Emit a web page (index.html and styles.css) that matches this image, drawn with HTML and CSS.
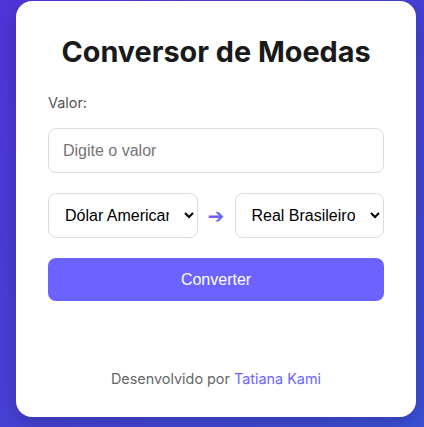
FILE: index.html
```html
<!DOCTYPE html>
<html lang="pt-BR">
<head>
<meta charset="UTF-8">
<title>Conversor de Moedas</title>
<link rel="stylesheet" href="styles.css">
</head>
<body>
<main class="card">
  <h1 class="title">Conversor de Moedas</h1>
  <label class="label" for="valor">Valor:</label>
  <input class="input" id="valor" type="text" placeholder="Digite o valor">
  <div class="row">
    <select class="select">
      <option>Dólar Americano</option>
    </select>
    <span class="arrow">➔</span>
    <select class="select">
      <option>Real Brasileiro</option>
    </select>
  </div>
  <button class="btn">Converter</button>
  <p class="footer">Desenvolvido por <a class="link" href="#">Tatiana Kami</a></p>
</main>
</body>
</html>
```

FILE: styles.css
```css
* { box-sizing: border-box; }
html, body { height: 100%; }
body {
  margin: 0;
  padding: 1px 8px 0 16px;
  background: linear-gradient(135deg, #5134d9 0%, #4741d6 50%, #3b50d5 100%);
  font-family: Inter, "Liberation Sans", sans-serif;
}
.card {
  width: 400px;
  height: 416px;
  background: #fff;
  border-radius: 16px;
  padding: 33px 32px 0;
  display: flex;
  flex-direction: column;
  box-shadow: 0 6px 20px rgba(0,0,0,0.2);
}
.title {
  margin: 0 0 25px;
  text-align: center;
  font-size: 28.8px;
  font-weight: 700;
  color: #1a1a1a;
  line-height: 35px;
}
.label {
  font-size: 14.4px;
  color: #555;
  line-height: 17px;
  margin-bottom: 17px;
}
.input {
  height: 45px;
  border: 1px solid #ddd;
  border-radius: 8px;
  padding: 0 14px;
  font-family: "Liberation Sans", Arial, sans-serif;
  font-size: 16px;
  margin: 0 0 20px;
  outline: none;
}
.input::placeholder { color: #757575; }
.row {
  display: flex;
  align-items: center;
  gap: 8px;
  margin-bottom: 20px;
}
.select {
  flex: 1;
  min-width: 0;
  height: 45px;
  border: 1px solid #ddd;
  border-radius: 8px;
  background: #fff;
  padding: 0 12px;
  font-family: "Liberation Sans", Arial, sans-serif;
  font-size: 16px;
  color: #000;
  text-align: center;
}
.arrow {
  width: 21px;
  color: #6c63ff;
  font-size: 20px;
  font-weight: bold;
  text-align: center;
  font-family: "DejaVu Sans", sans-serif;
}
.btn {
  height: 43px;
  border: none;
  border-radius: 8px;
  background: #6c63ff;
  color: #fff;
  font-family: "Liberation Sans", Arial, sans-serif;
  font-size: 16px;
}
.footer {
  margin: auto 0 30px;
  text-align: center;
  font-size: 14.4px;
  color: #666;
}
.link {
  color: #6c63ff;
  text-decoration: none;
}
```
